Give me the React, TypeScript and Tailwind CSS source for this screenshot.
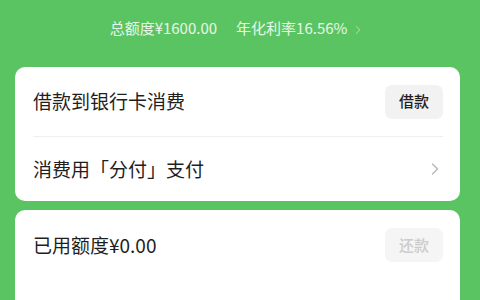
import { ChevronRight } from "lucide-react";

const font = { fontFamily: '"Noto Sans CJK SC", "Noto Sans", sans-serif' };

export default function App() {
  return (
    <div className="w-[480px] h-[300px] overflow-hidden bg-[#5bc462] pl-[15px]" style={font}>
      <div className="w-[445px]">
        {/* header summary */}
        <div className="h-[67px] flex items-start justify-center pt-[17px] text-[15px] text-white/85">
          <span>总额度¥1600.00</span>
          <span className="ml-[19px]">年化利率16.56%</span>
          <ChevronRight className="w-[14px] h-[14px] ml-[4px] mt-[6px] text-white/60" strokeWidth={1.5} />
        </div>

        {/* loan card */}
        <div className="bg-white rounded-[10px] pl-[18px] pr-[17px]">
          <div className="h-[70px] flex items-center justify-between border-b border-[#efefef]">
            <span className="text-[19px] text-[#1f1f1f]">借款到银行卡消费</span>
            <button className="w-[58px] h-[34px] rounded-[7px] bg-[#f2f2f2] text-[15px] font-medium text-[#1f1f1f]">借款</button>
          </div>
          <div className="h-[64px] flex items-center justify-between">
            <span className="text-[19px] text-[#1f1f1f]">消费用「分付」支付</span>
            <ChevronRight className="w-[20px] h-[20px] text-[#b5b5b5] -mr-[2px]" strokeWidth={1.5} />
          </div>
        </div>

        {/* used quota card */}
        <div className="mt-[9px] bg-white rounded-[10px] pl-[18px] pr-[17px] h-[120px]">
          <div className="h-[70px] flex items-center justify-between">
            <span className="text-[19px] text-[#1f1f1f]">已用额度¥0.00</span>
            <button className="w-[58px] h-[34px] rounded-[7px] bg-[#f5f5f5] text-[15px] font-medium text-[#cccccc]">还款</button>
          </div>
        </div>
      </div>
    </div>
  );
}
